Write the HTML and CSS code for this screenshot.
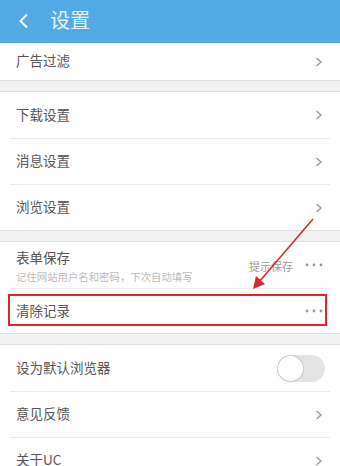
FILE: index.html
```html
<!DOCTYPE html>
<html lang="zh-CN">

<head>
    <meta charset="UTF-8">
    <meta name="viewport" content="width=device-width, initial-scale=1.0">
    <title>设置</title>
    <link rel="stylesheet" href="styles.css">
</head>

<body>
    <div class="header">
        <svg class="back" width="11" height="16" viewBox="0 0 11 16">
            <path d="M9 1.5 L2.5 8 L9 14.5" fill="none" stroke="#fff" stroke-width="2" />
        </svg>
        <span class="title">设置</span>
    </div>

    <div class="group group-top">
        <div class="row row-cut">
            <span class="label">广告过滤</span>
            <svg class="chevron" width="8" height="10" viewBox="0 0 8 10"><path d="M1.5 1 L6 5 L1.5 9" /></svg>
        </div>
    </div>

    <div class="group">
        <div class="row">
            <span class="label">下载设置</span>
            <svg class="chevron" width="8" height="10" viewBox="0 0 8 10"><path d="M1.5 1 L6 5 L1.5 9" /></svg>
        </div>
        <div class="row">
            <span class="label">消息设置</span>
            <svg class="chevron" width="8" height="10" viewBox="0 0 8 10"><path d="M1.5 1 L6 5 L1.5 9" /></svg>
        </div>
        <div class="row">
            <span class="label">浏览设置</span>
            <svg class="chevron" width="8" height="10" viewBox="0 0 8 10"><path d="M1.5 1 L6 5 L1.5 9" /></svg>
        </div>
    </div>

    <div class="group">
        <div class="row">
            <div class="text">
                <span class="label">表单保存</span>
                <span class="sub">记住网站用户名和密码，下次自动填写</span>
            </div>
            <span class="value">提示保存</span>
            <svg class="dots" width="18" height="4" viewBox="0 0 18 4">
                <circle cx="2" cy="2" r="1.4" /><circle cx="9" cy="2" r="1.4" /><circle cx="16" cy="2" r="1.4" />
            </svg>
        </div>
        <div class="row marked">
            <span class="label">清除记录</span>
            <svg class="dots" width="18" height="4" viewBox="0 0 18 4">
                <circle cx="2" cy="2" r="1.4" /><circle cx="9" cy="2" r="1.4" /><circle cx="16" cy="2" r="1.4" />
            </svg>
            <div class="highlight"></div>
        </div>
    </div>

    <div class="group">
        <div class="row">
            <span class="label">设为默认浏览器</span>
            <div class="switch"><div class="knob"></div></div>
        </div>
        <div class="row">
            <span class="label">意见反馈</span>
            <svg class="chevron" width="8" height="10" viewBox="0 0 8 10"><path d="M1.5 1 L6 5 L1.5 9" /></svg>
        </div>
        <div class="row">
            <span class="label">关于UC</span>
            <svg class="chevron" width="8" height="10" viewBox="0 0 8 10"><path d="M1.5 1 L6 5 L1.5 9" /></svg>
        </div>
    </div>

    <!-- annotation arrow -->
    <svg class="arrow" width="340" height="466" viewBox="0 0 340 466">
        <line x1="313" y1="219" x2="259" y2="282" stroke="#d9272e" stroke-width="1.6" />
        <path d="M253 289 L256 276 L265 284 Z" fill="#d9272e" />
    </svg>
</body>

</html>
```

FILE: styles.css
```css
:root {
    --header-color: #52aae5;
    --background-color: #f2f2f2;
    --border-color: #e0e0e0;
    --divider-color: #ebebeb;
    --text-color: #555;
}

body {
    font-family: "Noto Sans CJK SC", "Noto Sans", sans-serif;
    margin: 0;
    padding: 0;
    width: 340px;
    height: 466px;
    overflow: hidden;
    position: relative;
    background-color: var(--background-color);
    color: var(--text-color);
}

.header {
    height: 43px;
    background-color: var(--header-color);
    display: flex;
    align-items: center;
    box-shadow: 0 1px 2px rgba(0, 0, 0, .12);
}

.back {
    margin-left: 18px;
    margin-top: -1px;
}

.title {
    margin-left: 21px;
    font-size: 20px;
    color: #eaf5fc;
    line-height: 1;
    margin-top: -3px;
}

.group {
    background-color: #fff;
    border-top: 1px solid var(--border-color);
    border-bottom: 1px solid var(--border-color);
    margin-bottom: 10px;
}

.group-top {
    border-top: 0;
}

.row {
    position: relative;
    height: 46px;
    margin: 0 10px;
    padding: 0 7px 0 6px;
    display: flex;
    align-items: center;
    border-top: 1px solid var(--divider-color);
    box-sizing: border-box;
}

.row:first-child {
    border-top: 0;
}

.row-cut {
    height: 37px;
}

.label {
    font-size: 13.5px;
    flex-grow: 1;
    margin-top: -3px;
}

.text {
    flex-grow: 1;
    display: flex;
    flex-direction: column;
    gap: 2px;
}

.text .label {
    margin-top: 0;
}

.sub {
    font-size: 10.4px;
    color: #bbb;
}

.value {
    font-size: 11px;
    color: #999;
    margin-right: 12px;
    margin-top: 1px;
}

.chevron path {
    fill: none;
    stroke: #999;
    stroke-width: 1.4;
}

.dots {
    fill: #999;
}

.marked {
    height: 45px;
}

.highlight {
    position: absolute;
    left: -2px;
    right: 3px;
    top: 5px;
    height: 32px;
    border: 2px solid #e0262c;
    box-sizing: border-box;
}

.switch {
    width: 48px;
    height: 27px;
    border-radius: 14px;
    background-color: #e4e4e4;
    margin-right: -2px;
    display: flex;
    align-items: center;
    padding-left: 1px;
    box-sizing: border-box;
}

.knob {
    width: 25px;
    height: 25px;
    border-radius: 50%;
    background-color: #fff;
    box-shadow: 0 0 1px 1px rgba(0, 0, 0, .12);
}

.arrow {
    position: absolute;
    left: 0;
    top: 0;
    pointer-events: none;
}
```
